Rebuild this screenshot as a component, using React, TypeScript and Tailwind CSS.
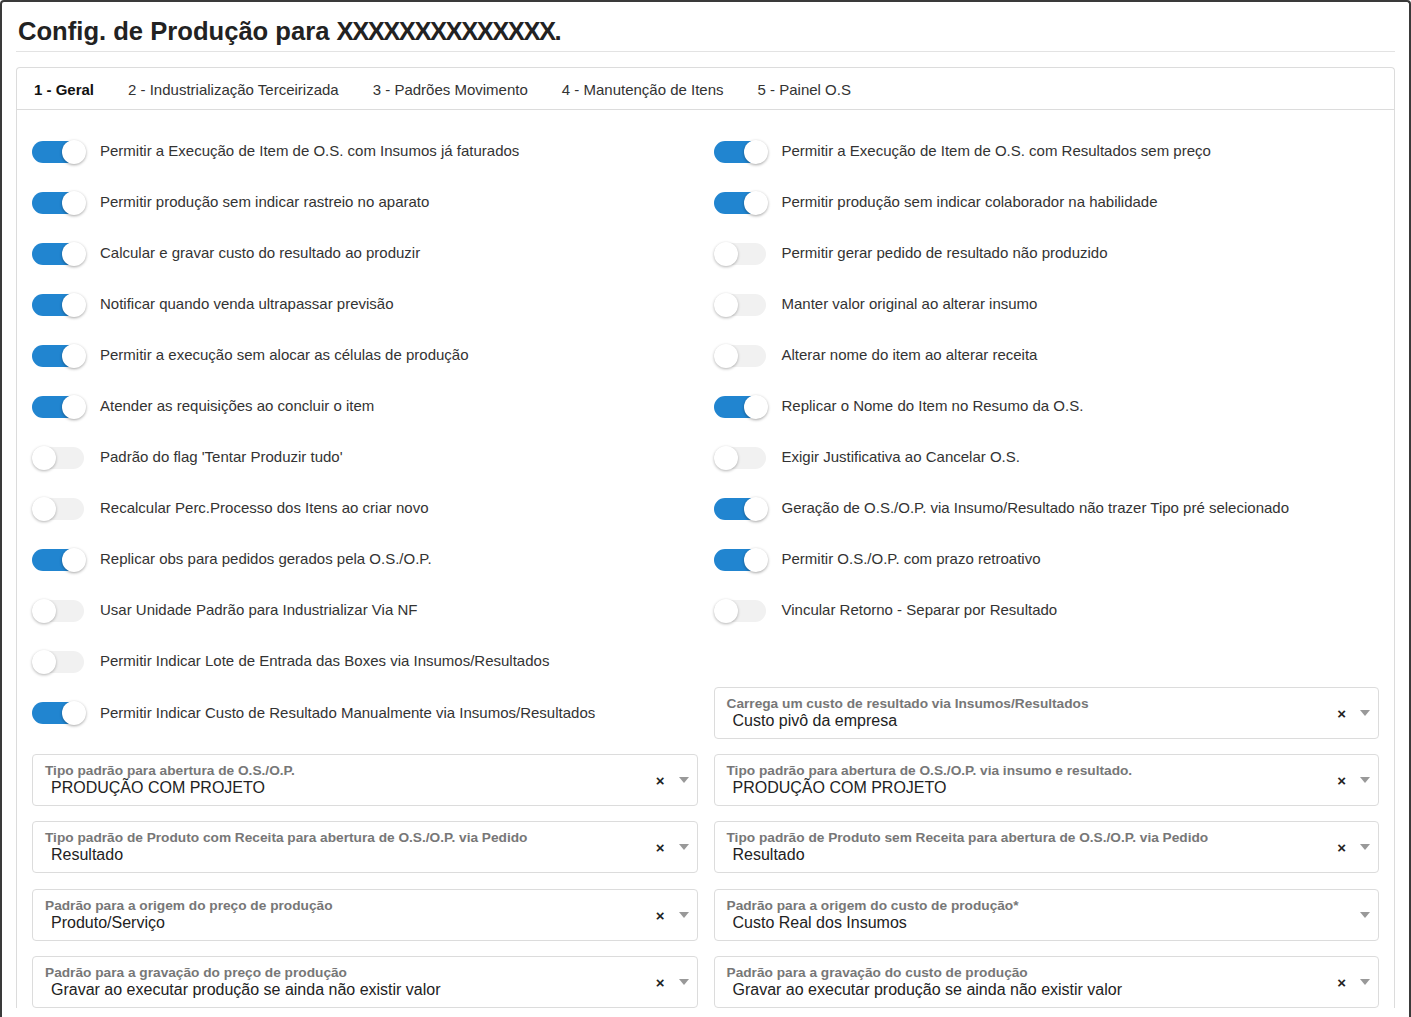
import React from 'react'

type ToggleItem = { label: string; on: boolean }

const leftToggles: ToggleItem[] = [
  { label: 'Permitir a Execução de Item de O.S. com Insumos já faturados', on: true },
  { label: 'Permitir produção sem indicar rastreio no aparato', on: true },
  { label: 'Calcular e gravar custo do resultado ao produzir', on: true },
  { label: 'Notificar quando venda ultrapassar previsão', on: true },
  { label: 'Permitir a execução sem alocar as células de produção', on: true },
  { label: 'Atender as requisições ao concluir o item', on: true },
  { label: "Padrão do flag 'Tentar Produzir tudo'", on: false },
  { label: 'Recalcular Perc.Processo dos Itens ao criar novo', on: false },
  { label: 'Replicar obs para pedidos gerados pela O.S./O.P.', on: true },
  { label: 'Usar Unidade Padrão para Industrializar Via NF', on: false },
  { label: 'Permitir Indicar Lote de Entrada das Boxes via Insumos/Resultados', on: false },
]

const rightToggles: (ToggleItem | null)[] = [
  { label: 'Permitir a Execução de Item de O.S. com Resultados sem preço', on: true },
  { label: 'Permitir produção sem indicar colaborador na habilidade', on: true },
  { label: 'Permitir gerar pedido de resultado não produzido', on: false },
  { label: 'Manter valor original ao alterar insumo', on: false },
  { label: 'Alterar nome do item ao alterar receita', on: false },
  { label: 'Replicar o Nome do Item no Resumo da O.S.', on: true },
  { label: 'Exigir Justificativa ao Cancelar O.S.', on: false },
  { label: 'Geração de O.S./O.P. via Insumo/Resultado não trazer Tipo pré selecionado', on: true },
  { label: 'Permitir O.S./O.P. com prazo retroativo', on: true },
  { label: 'Vincular Retorno - Separar por Resultado', on: false },
  null,
]

const tabs = [
  '1 - Geral',
  '2 - Industrialização Terceirizada',
  '3 - Padrões Movimento',
  '4 - Manutenção de Itens',
  '5 - Painel O.S',
]

function Switch({ on }: { on: boolean }) {
  return (
    <div className="relative h-[22px] w-[54px] shrink-0">
      <div
        className={
          on
            ? 'absolute inset-y-0 left-0 right-[2px] rounded-full bg-[#2185d0]'
            : 'absolute inset-y-0 left-0 right-[2px] rounded-full bg-[#f1f1f1]'
        }
      />
      <div
        className={
          on
            ? 'absolute right-0 top-[-1px] h-[24px] w-[24px] rounded-full bg-white shadow-[0_1px_3px_rgba(0,0,0,0.35)]'
            : 'absolute left-0 top-[-1px] h-[24px] w-[24px] rounded-full bg-white shadow-[0_1px_3px_rgba(0,0,0,0.3)]'
        }
      />
    </div>
  )
}

function ToggleRow({ item }: { item: ToggleItem }) {
  return (
    <div className="flex h-[51px] items-center">
      <Switch on={item.on} />
      <span className="ml-[14px] text-[15px] text-[#333]">{item.label}</span>
    </div>
  )
}

function SelectBox({
  label,
  value,
  clearable = true,
}: {
  label: string
  value: string
  clearable?: boolean
}) {
  return (
    <div className="flex h-[52px] items-center rounded-[4px] border border-[#dcdcdc] bg-white pl-[12px] pr-[8px]">
      <div className="flex min-w-0 flex-1 flex-col">
        <span className="text-[13.7px] leading-[15px] font-bold text-[#777]">{label}</span>
        <span className="pl-[6px] text-[16px] leading-[19px] text-[#222]">{value}</span>
      </div>
      {clearable && (
        <span className="mr-[14px] text-[15px] font-bold leading-none text-[#222]">×</span>
      )}
      <svg width="10" height="6" viewBox="0 0 10 6">
        <path d="M0 0 L10 0 L5 6 Z" fill="#999" />
      </svg>
    </div>
  )
}

export default function App() {
  return (
    <div
      className="min-h-[1017px] w-[1411px] rounded-t-[4px] border-2 border-b-0 border-[#3a3a3a] bg-white px-[14px]"
      style={{ fontFamily: '"Liberation Sans", Arial, sans-serif' }}
    >
      <div className="border-b border-[#e3e3e3] pt-[14px] pb-[5px] pl-[2px]">
        <h1 className="text-[25.6px] leading-[30px] font-bold text-[#222]">
          Config. de Produção para{' '}
          <span className="tracking-[-1.5px]">XXXXXXXXXXXXXX</span>.
        </h1>
      </div>

      <div className="mt-[15px] rounded-t-[4px] border border-b-0 border-[#dcdcdc]">
        <div className="flex h-[42px] items-center border-b border-[#dcdcdc] pt-[3px]">
          {tabs.map((t, i) => (
            <span
              key={t}
              className={
                i === 0
                  ? 'px-[17px] text-[15px] font-bold text-[#111]'
                  : 'px-[17px] text-[15px] text-[#333]'
              }
            >
              {t}
            </span>
          ))}
        </div>

        <div className="px-[15px] pt-[16px]">
          <div className="grid grid-cols-2 gap-x-4">
            {leftToggles.map((item, i) => {
              const right = rightToggles[i]
              return (
                <React.Fragment key={item.label}>
                  <ToggleRow item={item} />
                  {right ? <ToggleRow item={right} /> : <div className="h-[51px]" />}
                </React.Fragment>
              )
            })}
            <div className="flex h-[52px] items-center">
              <Switch on={true} />
              <span className="ml-[14px] text-[15px] text-[#333]">
                Permitir Indicar Custo de Resultado Manualmente via Insumos/Resultados
              </span>
            </div>
            <SelectBox
              label="Carrega um custo de resultado via Insumos/Resultados"
              value="Custo pivô da empresa"
            />
          </div>

          <div className="mt-[15px] grid grid-cols-2 gap-x-4">
            <SelectBox label="Tipo padrão para abertura de O.S./O.P." value="PRODUÇÃO COM PROJETO" />
            <SelectBox
              label="Tipo padrão para abertura de O.S./O.P. via insumo e resultado."
              value="PRODUÇÃO COM PROJETO"
            />
          </div>
          <div className="mt-[15px] grid grid-cols-2 gap-x-4">
            <SelectBox
              label="Tipo padrão de Produto com Receita para abertura de O.S./O.P. via Pedido"
              value="Resultado"
            />
            <SelectBox
              label="Tipo padrão de Produto sem Receita para abertura de O.S./O.P. via Pedido"
              value="Resultado"
            />
          </div>
          <div className="mt-4 grid grid-cols-2 gap-x-4">
            <SelectBox label="Padrão para a origem do preço de produção" value="Produto/Serviço" />
            <SelectBox
              label="Padrão para a origem do custo de produção*"
              value="Custo Real dos Insumos"
              clearable={false}
            />
          </div>
          <div className="mt-[15px] grid grid-cols-2 gap-x-4">
            <SelectBox
              label="Padrão para a gravação do preço de produção"
              value="Gravar ao executar produção se ainda não existir valor"
            />
            <SelectBox
              label="Padrão para a gravação do custo de produção"
              value="Gravar ao executar produção se ainda não existir valor"
            />
          </div>
        </div>
      </div>
    </div>
  )
}
